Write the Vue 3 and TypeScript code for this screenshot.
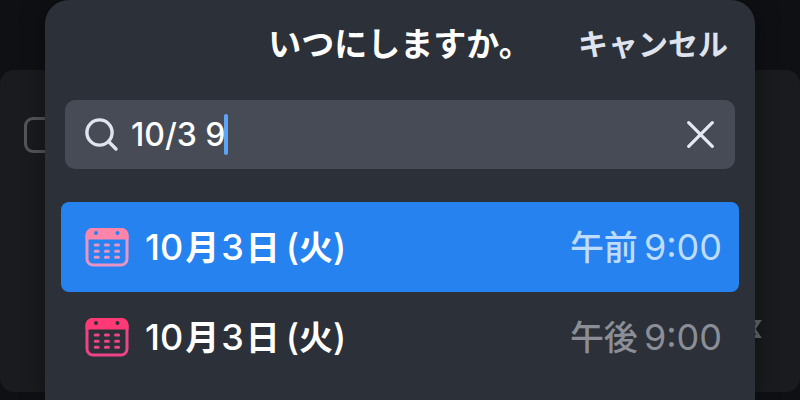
<script setup lang="ts">
import { computed, ref } from 'vue'

interface Suggestion {
  id: number
  month: number
  day: number
  weekday: string
  period: string
  time: string
}

const query = ref('10/3 9')
const selectedId = ref(1)
const suggestions: Suggestion[] = [
  { id: 1, month: 10, day: 3, weekday: '火', period: '午前', time: '9:00' },
  { id: 2, month: 10, day: 3, weekday: '火', period: '午後', time: '9:00' },
]
const results = computed(() => (query.value.trim() ? suggestions : []))
</script>

<template>
  <div class="stage">
    <div class="backdrop" aria-hidden="true">
      <div class="task">
        <span class="task-box"></span>
        <svg class="task-mark" width="18" height="18" viewBox="0 0 18 18">
          <path d="M1 1.5H15L10 9L15 16.5H1" fill="none" stroke="currentColor" stroke-width="3" />
        </svg>
      </div>
    </div>

    <main class="dialog" role="dialog" aria-labelledby="dialog-title">
      <header class="header">
        <h1 id="dialog-title" class="title">いつにしますか。</h1>
        <button class="cancel" type="button">キャンセル</button>
      </header>

      <div class="search">
        <label class="search-label" for="when" aria-label="日時">
          <svg width="34" height="34" viewBox="0 0 34 34" fill="none" stroke="currentColor" stroke-width="3.4" stroke-linecap="round">
            <circle cx="14.5" cy="14.5" r="12.6" />
            <path d="M23.8 23.8L31 31" />
          </svg>
        </label>
        <input id="when" v-model="query" class="search-input" type="text" autocomplete="off" />
        <span class="caret"></span>
        <button class="clear" type="button" aria-label="消去" @click="query = ''">
          <svg width="28" height="28" viewBox="0 0 28 28" fill="none" stroke="currentColor" stroke-width="3.2" stroke-linecap="round">
            <path d="M1.7 1.7L25.3 25.3M25.3 1.7L1.7 25.3" />
          </svg>
        </button>
      </div>

      <ul class="results">
        <li v-for="item in results" :key="item.id">
          <button
            class="option"
            :class="{ selected: item.id === selectedId }"
            type="button"
            @click="selectedId = item.id"
          >
            <svg class="calendar" width="44" height="40" viewBox="0 0 44 40">
              <rect x="2" y="2.5" width="40" height="35.5" rx="6" fill="none" stroke="currentColor" stroke-width="3" />
              <path
                class="calendar-top"
                fill-rule="evenodd"
                d="M7.5 1H36.5A7 7 0 0 1 43.5 8V12.5H.5V8A7 7 0 0 1 7.5 1ZM11 3.9a2 2 0 1 0 0 4a2 2 0 1 0 0-4ZM32.5 3.9a2 2 0 1 0 0 4a2 2 0 1 0 0-4Z"
              />
              <path
                d="M10.2 18h3M20.4 18h3M30.6 18h3M10.2 24.2h3M20.4 24.2h3M30.6 24.2h3M10.2 30.2h3M20.4 30.2h3M30.6 30.2h3"
                fill="none"
                stroke="currentColor"
                stroke-width="3"
                stroke-linecap="round"
              />
            </svg>
            <span class="date">
              <span class="day">
                <span>{{ item.month }}</span><span class="kanji">月</span>
                <span>{{ item.day }}</span><span class="kanji">日</span>
              </span>
              <span class="weekday">(<span class="kanji">{{ item.weekday }}</span>)</span>
            </span>
            <span class="time"><span class="kanji">{{ item.period }}</span><span>{{ item.time }}</span></span>
          </button>
        </li>
      </ul>
    </main>
  </div>
</template>

<style>
body {
  background: #0f1014;
}
</style>

<style scoped>
.stage {
  display: grid;
  min-height: 100vh;
  overflow: hidden;
  background: #0f1014;
  color: #ffffff;
  font-family: Inter, "Noto Sans CJK JP", sans-serif;
}

.backdrop,
.dialog {
  grid-area: 1 / 1;
}

.backdrop {
  display: grid;
  padding: 70px 0 8px;
}

.task {
  display: flex;
  justify-content: space-between;
  padding: 47px 38px 54px 24px;
  border-radius: 14px;
  background: #1a1b1e;
}

.task-box {
  box-sizing: border-box;
  width: 36px;
  height: 36px;
  border: 3px solid #55565a;
  border-radius: 9px;
}

.task-mark {
  align-self: flex-end;
  color: #66686c;
}

.dialog {
  position: relative;
  box-sizing: border-box;
  margin: 0 45px;
  padding: 0 16px;
  border-radius: 24px 24px 0 0;
  background: #2c3038;
  box-shadow: 0 0 24px rgba(0, 0, 0, 0.4);
}

button {
  margin: 0;
  padding: 0;
  border: 0;
  background: none;
  color: inherit;
  font: inherit;
  cursor: pointer;
}

.header {
  display: grid;
  grid-template-columns: 1fr auto 1fr;
  align-items: center;
  height: 88px;
  padding: 0 11px;
}

.title {
  grid-column: 2;
  margin: 0;
  font-size: 33px;
  font-weight: 600;
  line-height: 48px;
}

.cancel {
  justify-self: end;
  color: #dfe3ee;
  font-size: 30px;
  font-weight: 600;
  line-height: 48px;
}

.search {
  display: flex;
  align-items: center;
  height: 69px;
  margin: 12px 4px 33px;
  padding: 0 20px;
  border-radius: 10px;
  background: #474b55;
}

.search-label {
  display: flex;
  margin-right: 12px;
  color: #e0e4f0;
}

.search-input {
  field-sizing: content;
  min-width: 0;
  padding: 0;
  border: 0;
  outline: 0;
  background: none;
  color: #ffffff;
  font: inherit;
  font-size: 32px;
  font-weight: 500;
  line-height: 44px;
}

.caret {
  flex: none;
  width: 4px;
  height: 41px;
  margin-left: -2px;
  border-radius: 2px;
  background: #5ca5f6;
}

.clear {
  display: flex;
  margin-left: auto;
  color: #e6e9f3;
}

.results {
  margin: 0;
  padding: 0;
  list-style: none;
}

.option {
  display: flex;
  align-items: center;
  width: 100%;
  height: 90px;
  padding: 0 17px 0 24px;
  border-radius: 8px;
  font-size: 36px;
  line-height: 48px;
  text-align: left;
}

.option.selected {
  background: #2682ef;
}

.calendar {
  flex: none;
  margin-right: 16px;
  color: #ee4485;
}

.calendar-top {
  fill: #ff3975;
}

.selected .calendar {
  color: #e994c4;
}

.selected .calendar-top {
  fill: #ff84a9;
}

.date,
.day,
.time {
  display: flex;
  align-items: baseline;
}

.date {
  gap: 6px;
  font-weight: 500;
}

.day {
  gap: 2px;
}

.kanji {
  font-size: 34px;
  font-weight: 600;
}

.time {
  gap: 6px;
  margin-left: auto;
  color: #8b8e96;
}

.time .kanji {
  font-weight: 500;
}

.selected .time {
  color: #bddcff;
}
</style>
